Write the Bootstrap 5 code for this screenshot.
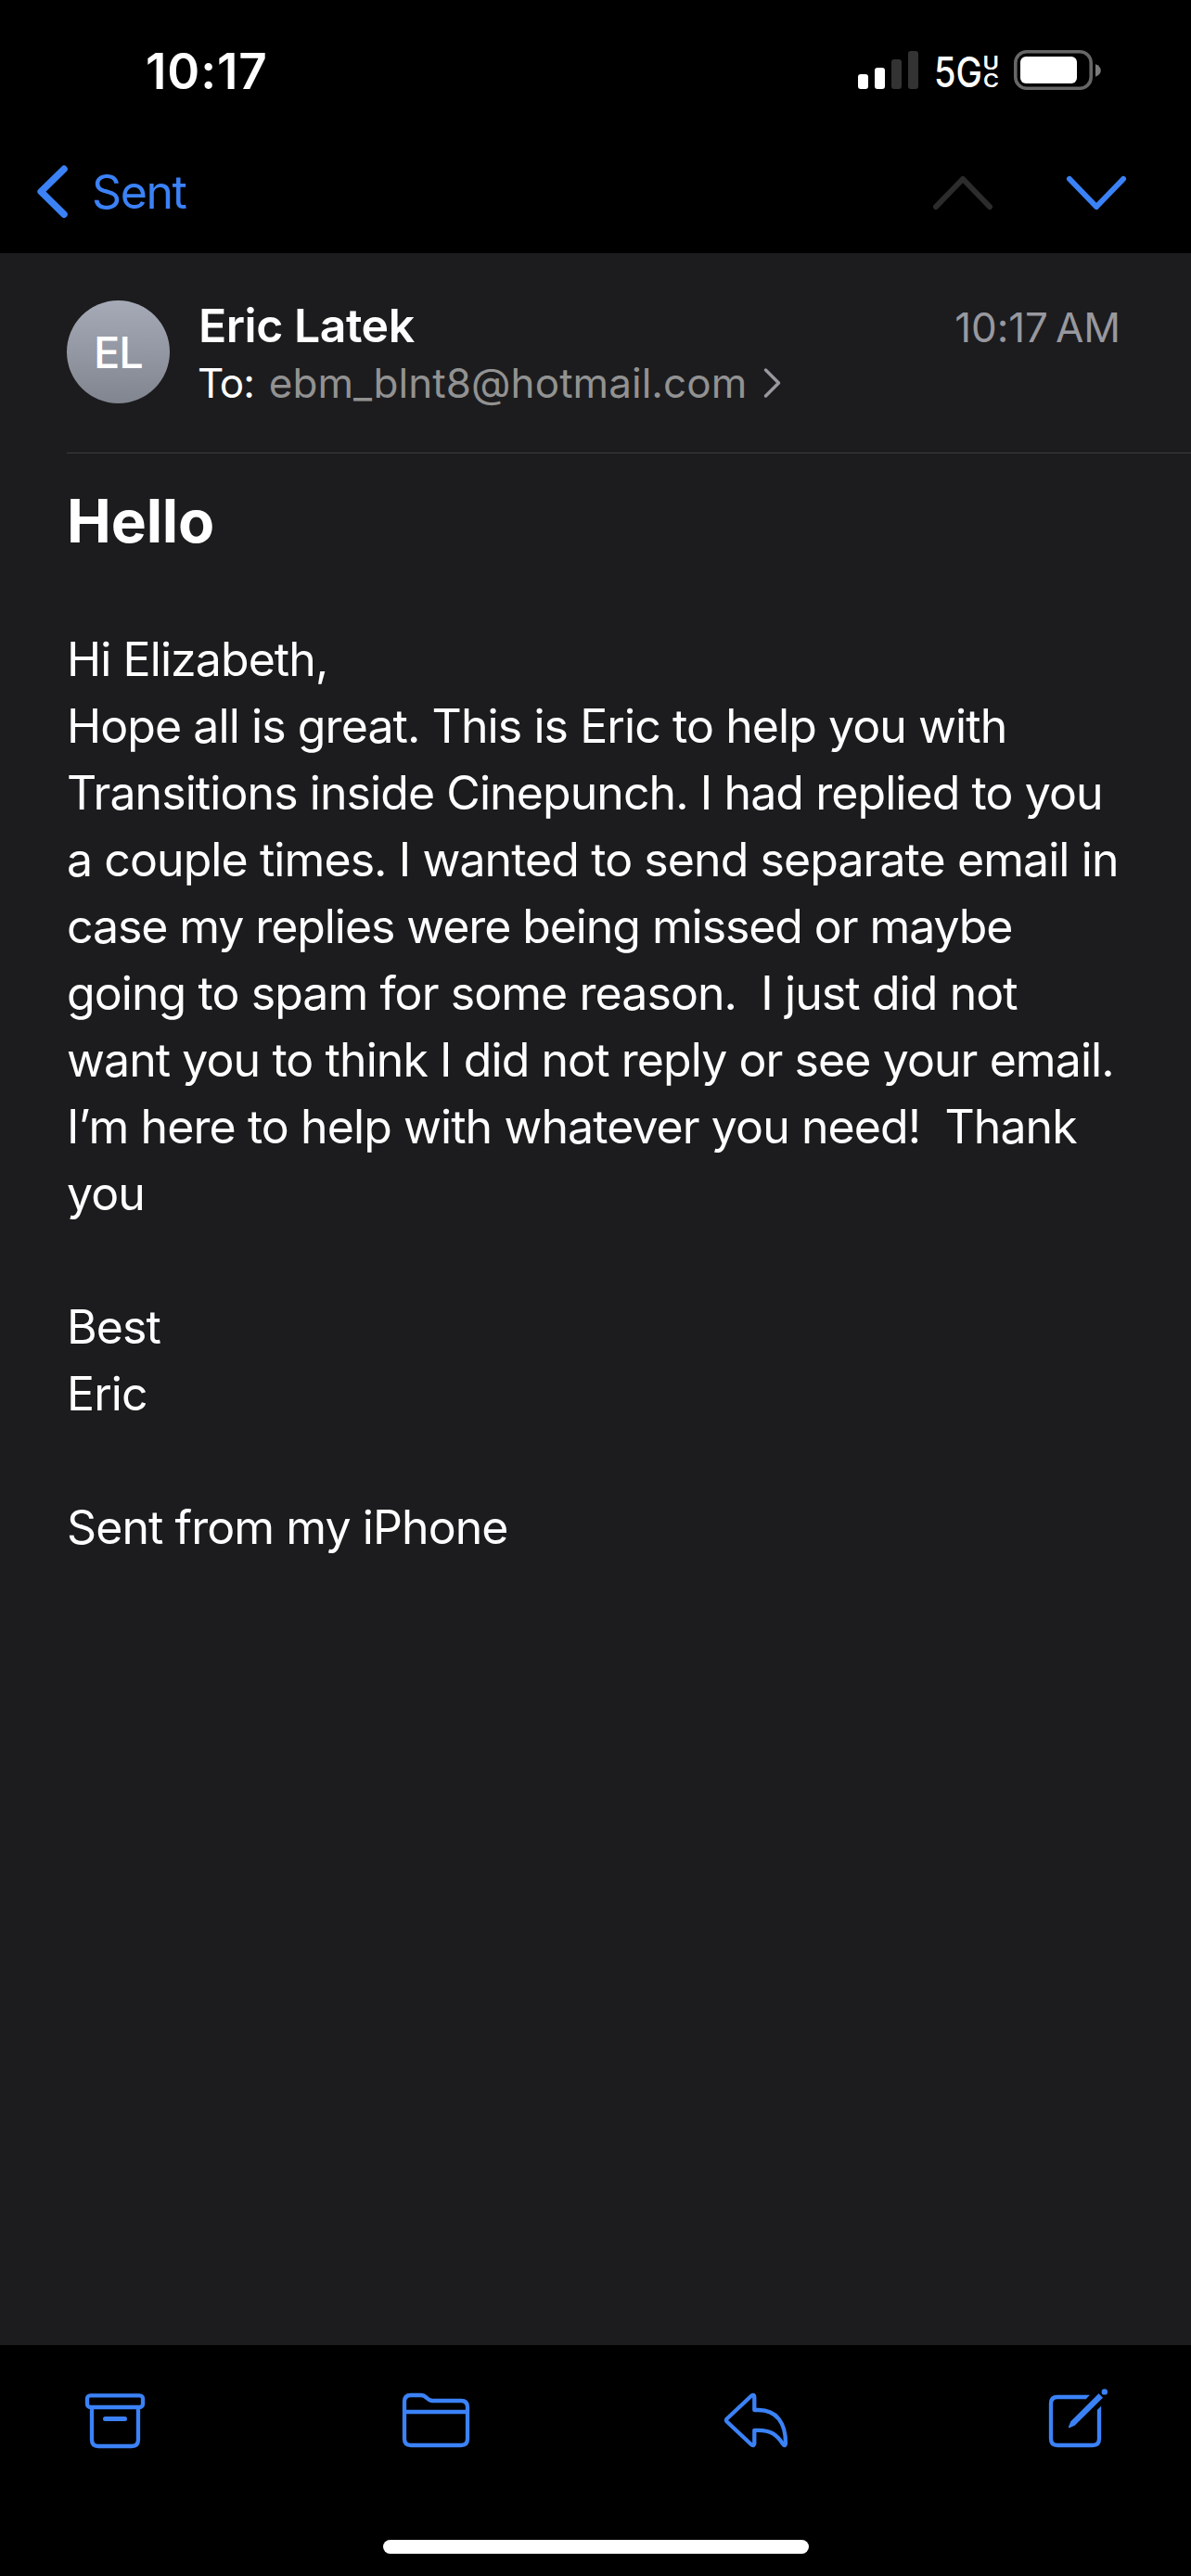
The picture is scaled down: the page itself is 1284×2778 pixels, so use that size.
<!DOCTYPE html>
<html lang="en" data-bs-theme="dark">
<head>
<meta charset="utf-8">
<meta name="viewport" content="width=device-width, initial-scale=1">
<title>Hello</title>
<link href="https://cdn.jsdelivr.net/npm/bootstrap@5.3.0/dist/css/bootstrap.min.css" rel="stylesheet">
<style>
:root { --tint: #3b82f7; }
body { background: #000; color: #fff; font-family: Inter, "Liberation Sans", sans-serif; font-size: 50px; }
svg { display: block; flex: none; }
.screen { width: 1284px; height: 2778px; }
.status-bar { height: 130px; padding: 47px 95px 0 157px; }
.clock { font-size: 53px; line-height: 60px; font-weight: 600; letter-spacing: .9px; }
.status-icons { margin-top: 3px; }
.nav-row { height: 143px; padding: 42px 65px 0 34px; }
.back-link { color: var(--tint); line-height: 60px; letter-spacing: -1.4px; gap: 19px; }
.back-link span { padding-top: 1px; }
.tinted { stroke: var(--tint); fill: none; stroke-width: 4.3; stroke-linecap: round; stroke-linejoin: round; }
.solid { fill: var(--tint); stroke: none; }
.heavy { stroke-width: 7.5; }
.medium-line { stroke-width: 5; }
.butt { stroke-linecap: butt; }
.step-icons { gap: 70px; margin-top: 4px; }
.step-icon { fill: none; stroke: var(--tint); stroke-width: 6; stroke-linecap: round; stroke-linejoin: round; }
.step-icon.off { stroke: #2c2c2c; }
.message { background: #1c1c1e; }
.message-head { margin-left: 72px; height: 216px; padding: 47px 76px 0 0; border-bottom: 1px solid #3d3d41; }
.avatar { width: 111px; height: 111px; margin: 4px 31px 0 0; padding-top: 1px; background: linear-gradient(#a6aab7, #81858f); font-size: 47px; font-weight: 500; letter-spacing: -1px; }
.sender { line-height: 62px; font-weight: 600; letter-spacing: -.5px; }
.recipient { line-height: 62px; font-size: 44px; }
.recipient-label { letter-spacing: -1.1px; margin-right: 16px; margin-left: -1px; }
.recipient-address { color: #929292; letter-spacing: .05px; margin-right: 16px; }
.sent-time { font-size: 44px; line-height: 62px; padding-top: 2px; color: #98989f; letter-spacing: -.1px; word-spacing: -4px; }
.subject { font-size: 64px; line-height: 80px; font-weight: 700; margin: 33px 0 73px 72px; letter-spacing: -.15px; }
.message-text { margin-left: 72px; line-height: 72px; letter-spacing: -.92px; white-space: pre; }
.snug { letter-spacing: -1.08px; }
.toolbar { height: 210px; padding: 41px 82px 0 84px; }
.bottom-area { height: 249px; }
.home-bar { width: 459px; height: 15px; }
</style>
</head>
<body>
<div class="screen d-flex flex-column overflow-hidden">
  <header>
    <div class="status-bar d-flex justify-content-between align-items-start">
      <div class="clock">10:17</div>
      <svg class="status-icons" width="264" height="50" viewBox="925 50 264 50" role="img" aria-label="Signal, 5G UC, battery">
        <g fill="#fff">
          <rect x="925" y="80" width="11" height="16" rx="3"/>
          <rect x="943" y="73" width="11" height="23" rx="3"/>
        </g>
        <g fill="#333">
          <rect x="961" y="64" width="11" height="32" rx="3"/>
          <rect x="979" y="55" width="11" height="41" rx="3"/>
        </g>
        <g fill="#fff" font-weight="600">
          <text x="1007" y="94.3" font-size="44.5" font-weight="500" textLength="52" lengthAdjust="spacingAndGlyphs">5G</text>
          <text x="1059.5" y="75.3" font-size="20" textLength="17.5" lengthAdjust="spacingAndGlyphs">U</text>
          <text x="1060" y="94.3" font-size="20" textLength="17" lengthAdjust="spacingAndGlyphs">C</text>
        </g>
        <rect x="1094.8" y="55.8" width="81.400" height="39.400" rx="12" fill="none" stroke="#666" stroke-width="3.600"/>
        <rect x="1100" y="61" width="61" height="29" rx="6" fill="#fff"/>
        <path d="M1181 69.300c3.500 1.200 5.800 3.600 5.800 6.700s-2.300 5.500-5.800 6.700z" fill="#7b7b7b"/>
      </svg>
    </div>
    <nav class="nav-row d-flex justify-content-between align-items-start">
      <a class="back-link d-flex align-items-center text-decoration-none" href="#">
        <svg class="tinted" width="46" height="68" viewBox="34 172 46 68"><path class="heavy" d="M69 182.300 44.200 206.700 69 231.200"/></svg>
        <span>Sent</span>
      </a>
      <div class="step-icons d-flex">
        <svg class="step-icon off" width="74" height="60" viewBox="1001 176 74 60"><path d="M1009 223 1038 193 1067 223"/></svg>
        <svg class="step-icon" width="74" height="60" viewBox="1145 176 74 60"><path d="M1153 193 1182 223 1211 193"/></svg>
      </div>
    </nav>
  </header>

  <main class="message flex-grow-1">
    <section class="message-head d-flex align-items-start">
      <div class="avatar rounded-circle d-flex align-items-center justify-content-center">EL</div>
      <div class="flex-grow-1">
        <div class="sender">Eric Latek</div>
        <div class="recipient d-flex align-items-center">
          <span class="recipient-label">To:</span>
          <span class="recipient-address">ebm_blnt8@hotmail.com</span>
          <svg width="24" height="38" viewBox="821 395 24 38" fill="none" stroke="#98989f" stroke-width="3.500" stroke-linecap="round" stroke-linejoin="round"><path d="M825.500 400 839.500 414 825.500 428"/></svg>
        </div>
      </div>
      <div class="sent-time">10:17 AM</div>
    </section>
    <h1 class="subject">Hello</h1>
    <div class="message-text">Hi Elizabeth,
Hope all is great. This is Eric to help you with
Transitions inside Cinepunch. I had replied to you
a couple times. I wanted to send separate email in
<span class="snug">case my replies were being missed or maybe</span>
going to spam for some reason.  I just did not
want you to think I did not reply or see your email.
I’m here to help with whatever you need!  Thank
you

Best
Eric

Sent from my iPhone</div>
  </main>

  <footer class="bottom-area">
    <div class="toolbar d-flex justify-content-between align-items-start">
      <svg class="tinted" width="80" height="80" viewBox="84 2570 80 80">
        <rect x="94" y="2583.300" width="60" height="12.700" rx="3.500"/>
        <path d="M99 2597v34q0 7 7 7h36q7 0 7-7v-34"/>
        <path class="medium-line" d="M113.500 2608.500h21"/>
      </svg>
      <svg class="tinted" width="80" height="80" viewBox="430 2570 80 80">
        <path d="M436 2590q0-7 7-7h10.500c3.500 0 4.700 1.200 6.600 3 1.900 1.900 3.200 3 6.400 3H497q7 0 7 7v34q0 7-7 7h-54q-7 0-7-7zM436 2601h68"/>
      </svg>
      <svg class="tinted" width="80" height="80" viewBox="776 2570 80 80">
        <path d="M783.600 2611.500q-1.300-1.500 0-3L810 2583.800q3.300-2.300 3.300 1.500V2599h4.500c19.500 0 29.200 14 29.200 36q-.5 4-3 .8c-6.500-11.300-14.500-15-26.200-15h-4.500v14q0 3.800-3.300 1.400z"/>
      </svg>
      <svg class="tinted" width="80" height="80" viewBox="1122 2570 80 80">
        <path class="butt" d="M1170.500 2585H1140q-7 0-7 7v38q0 7 7 7h38q7 0 7-7v-31"/>
        <path class="solid" d="M1170 2582.850h5l-4.300 4.300h-.7zM1182.850 2599.500v-.5l4.300-4.300v4.800z"/>
        <path class="solid" d="M1184.500 2581.300 1189 2585.700 1158.600 2615.800 1152.800 2618.300Q1151.500 2618.500 1152 2617L1154.400 2611.300z"/>
        <circle class="solid" cx="1190.800" cy="2579.400" r="3.200"/>
      </svg>
    </div>
    <div class="home-bar bg-white rounded-pill mx-auto"></div>
  </footer>
</div>
<script src="https://cdn.jsdelivr.net/npm/bootstrap@5.3.0/dist/js/bootstrap.bundle.min.js"></script>
</body>
</html>
